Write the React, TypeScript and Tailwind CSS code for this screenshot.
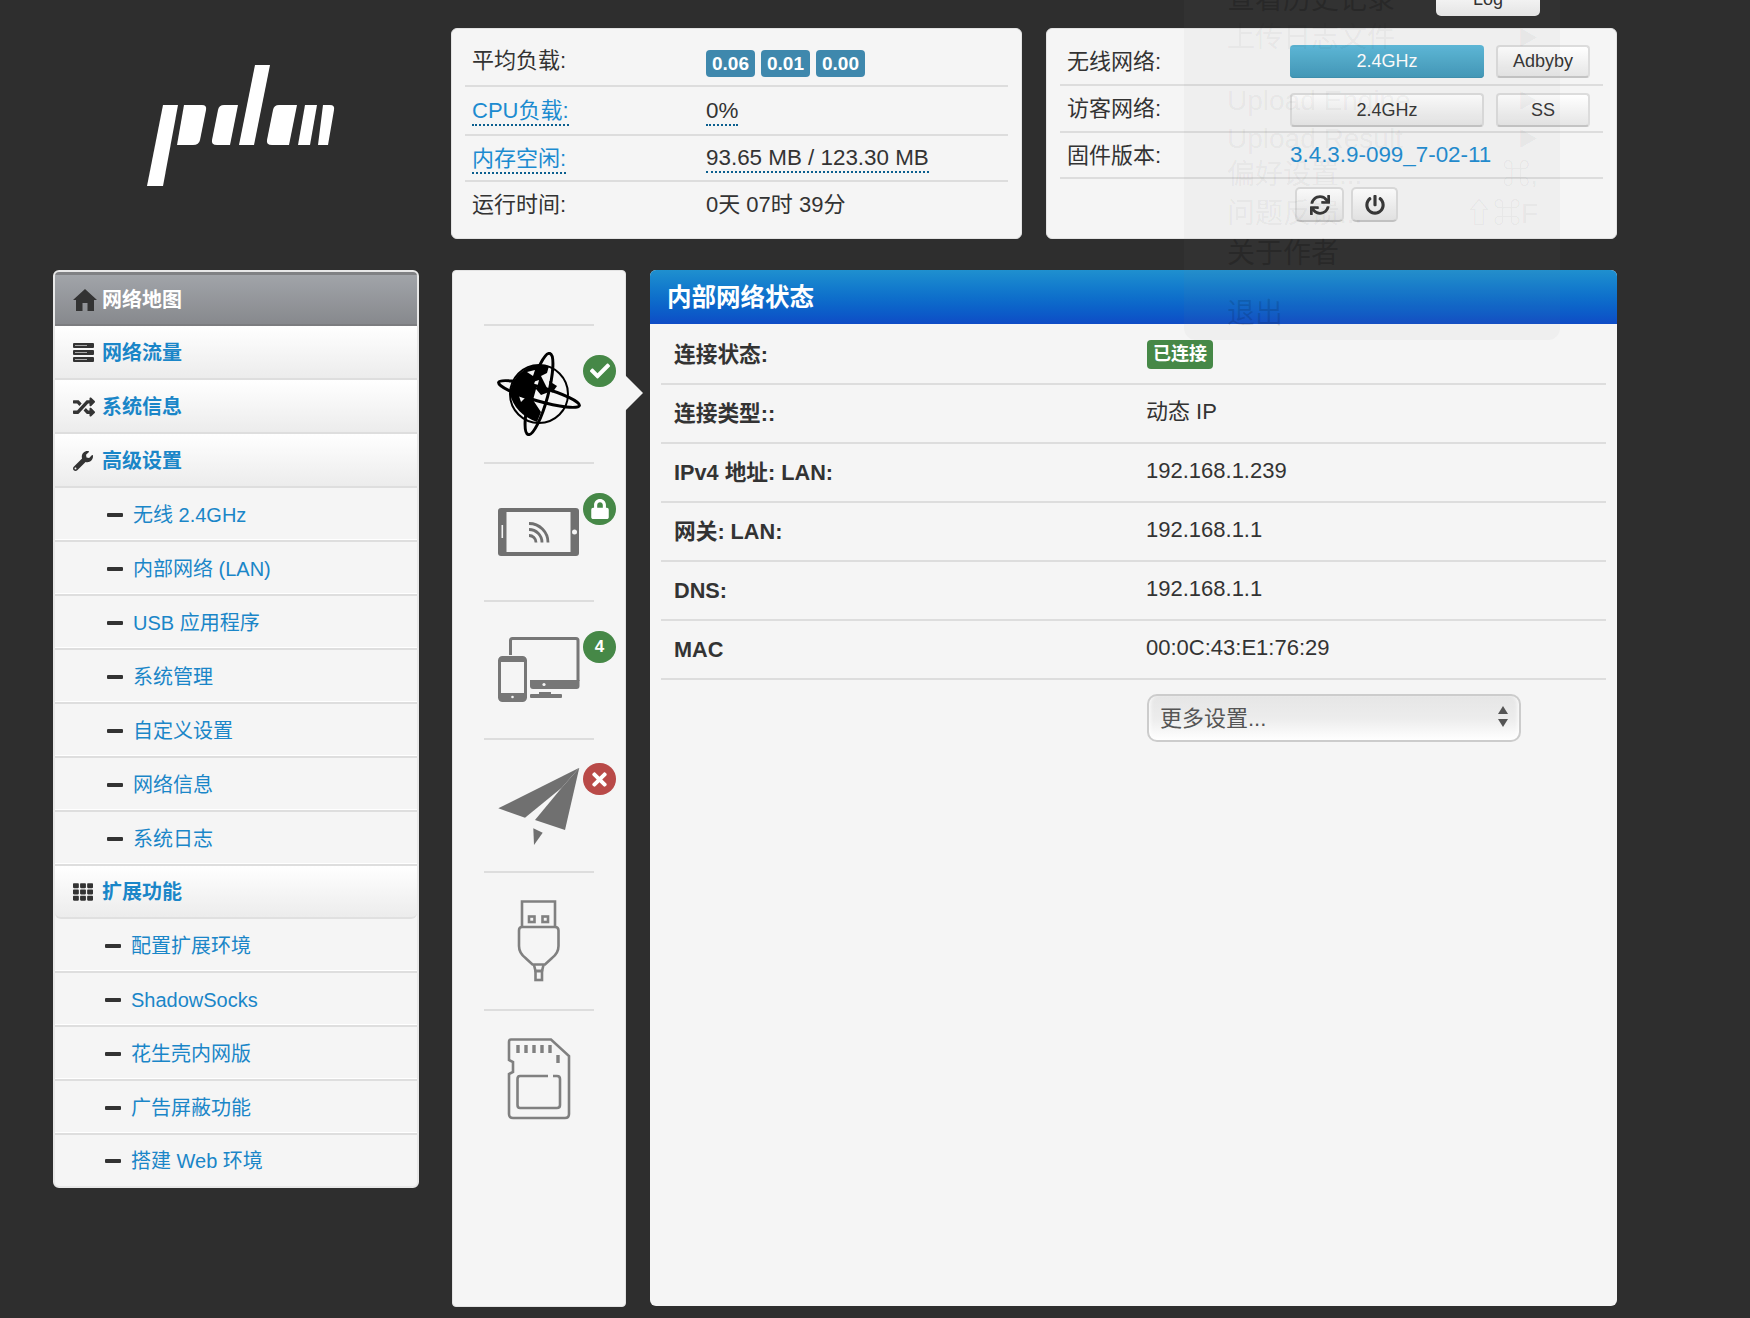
import { FaCheck, FaLock, FaPowerOff, FaRandom, FaSync, FaTh, FaTimes, FaWrench } from "react-icons/fa";

const subOne = ["无线 2.4GHz", "内部网络 (LAN)", "USB 应用程序", "系统管理", "自定义设置", "网络信息", "系统日志"];
const subTwo = ["配置扩展环境", "ShadowSocks", "花生壳内网版", "广告屏蔽功能"];

const statusRows = [
  { label: "连接状态:", value: null },
  { label: "连接类型::", value: "动态 IP" },
  { label: "IPv4 地址: LAN:", value: "192.168.1.239" },
  { label: "网关: LAN:", value: "192.168.1.1" },
  { label: "DNS:", value: "192.168.1.1" },
  { label: "MAC", value: "00:0C:43:E1:76:29" },
];

function Logo() {
  return (
    <svg width="200" height="130" viewBox="140 60 200 130" fill="#fff" className="ml-[140px] mt-[60px]">
      <polygon points="163,105 178,105 163,186 147,186" />
      <path d="M184 105H202Q207 105 206 110L200 140Q199 145 193 145H177Z" />
      <path d="M224 105H238L230 145H217Q211 145 212 140L218 110Q219 105 224 105Z" />
      <polygon points="255,65 270,65 254,145 239,145" />
      <path d="M279 105H297L289 145H272Q266 145 267 140L273 110Q274 105 279 105Z" />
      <polygon points="305,105 317,105 310,145 298,145" />
      <path d="M323 105H330Q335 105 334 110L328 145H318Z" />
    </svg>
  );
}

function HomeIcon() {
  return (
    <svg width="24" height="22" viewBox="0 0 24 22" fill="#333">
      <path d="M12 0L24 11H21V22H14.500V14H9.500V22H3V11H0Z" />
    </svg>
  );
}

function ServerIcon() {
  return (
    <svg width="21" height="19" viewBox="0 0 21 19" fill="#333">
      <rect x="0" y="0" width="21" height="5" rx="1" />
      <rect x="0" y="7" width="21" height="5" rx="1" />
      <rect x="0" y="14" width="21" height="5" rx="1" />
      <rect x="2" y="2" width="12" height="1" fill="#aaa" />
      <rect x="2" y="9" width="12" height="1" fill="#aaa" />
      <rect x="2" y="16" width="12" height="1" fill="#aaa" />
    </svg>
  );
}

function GlobeIcon() {
  return (
    <svg width="84" height="84" viewBox="0 0 84 84">
      <circle cx="42" cy="42" r="29" fill="none" stroke="#000" strokeWidth="2" />
      <path d="M22 22Q34 10 52 14L50 21L44 24L48 32L52 40L44 43L39 37L36 48L44 60L40 70Q18 62 13 42Q14 30 22 22Z" fill="#000" />
      <path d="M52 29L60 34L55 41Z" fill="#000" />
      <path d="M30 20L38 18L36 24Z M36 30L42 28L40 36Z M22 44L28 46L24 50Z" fill="#f5f5f5" />
      <ellipse cx="42" cy="42" rx="42" ry="7" fill="none" stroke="#000" strokeWidth="3" transform="rotate(16 42 42)" />
      <ellipse cx="42" cy="42" rx="42" ry="9" fill="none" stroke="#000" strokeWidth="3" transform="rotate(-75 42 42)" />
    </svg>
  );
}

function TabletIcon() {
  return (
    <svg width="82" height="48" viewBox="0 0 82 48">
      <rect width="81" height="48" rx="3" fill="#707070" />
      <rect x="8.500" y="4" width="64" height="40" fill="#f5f5f5" />
      <circle cx="76.500" cy="24" r="2.500" fill="#f5f5f5" />
      <rect x="3.500" y="17" width="1.600" height="13" fill="#f5f5f5" />
      <g fill="none" stroke="#707070" strokeWidth="2.800">
        <path d="M31 27.500A7 7 0 0 1 38 34.500" />
        <path d="M31 21.500A13 13 0 0 1 44 34.500" />
        <path d="M31 15.500A19 19 0 0 1 50 34.500" />
      </g>
    </svg>
  );
}

function DevicesIcon() {
  return (
    <svg width="82" height="66" viewBox="0 0 82 66">
      <path d="M12.500 18V3.500Q12.500 1.500 14.500 1.500H78Q80 1.500 80 3.500V44" fill="none" stroke="#777" strokeWidth="3" />
      <path d="M32 43H81.500V49Q81.500 52 78.500 52H35Q32 52 32 49Z" fill="#777" />
      <circle cx="46" cy="47.500" r="1.600" fill="#f5f5f5" />
      <rect x="41" y="55" width="12" height="2" fill="#777" />
      <rect x="32" y="57" width="32" height="4" rx="1" fill="#777" />
      <rect x="1.500" y="20.500" width="26" height="43" rx="3" fill="none" stroke="#777" strokeWidth="3" />
      <rect x="2" y="21" width="25" height="4" fill="#777" />
      <rect x="2" y="56" width="25" height="7" fill="#777" />
      <circle cx="14.500" cy="60" r="1.300" fill="#f5f5f5" />
    </svg>
  );
}

function PlaneIcon() {
  return (
    <svg width="82" height="78" viewBox="0 0 82 78" fill="#707070">
      <polygon points="81.300,0.700 0.300,41.300 27,50.700 63.700,20.700" />
      <polygon points="81.300,0.700 67,63 37,53 63.700,20.700" />
      <polygon points="35.300,61.300 44.700,65.700 36,78" />
    </svg>
  );
}

function UsbIcon() {
  return (
    <svg width="44" height="82" viewBox="0 0 44 82" fill="none" stroke="#808080" strokeWidth="2.600">
      <path d="M5 27V1.500H38V27" />
      <rect x="12" y="16.500" width="5.500" height="5.500" />
      <rect x="25.500" y="16.500" width="5.500" height="5.500" />
      <path d="M5 27H38Q41.500 27 41.500 30.500V46Q41.500 53 35 58L28 64.500H15.500L8.500 58Q2 53 2 46V30.500Q2 27 5 27Z" />
      <path d="M17 65L18.500 71H25L26.500 65" />
      <rect x="18.500" y="71" width="6.500" height="9" />
    </svg>
  );
}

function SdIcon() {
  return (
    <svg width="64" height="82" viewBox="0 0 64 82" fill="none" stroke="#808080" strokeWidth="2.600">
      <path d="M4 1.500H44L62 18V76Q62 80 58 80H6Q2 80 2 76V36L6 34V24L2 22V4Q2 1.500 4 1.500Z" />
      <g strokeWidth="3.400">
        <path d="M11 7V15M19 7V15M27 7V15M35 7V15M43 7V15M51 17V25" />
      </g>
      <path d="M41 38H13Q10.500 38 10.500 41V67Q10.500 70 13 70H50Q53 70 53 67V41Q53 38 50 38H46" />
    </svg>
  );
}

function Badge({ className, top, children }: { className: string; top: string; children: React.ReactNode }) {
  return (
    <span className={`absolute left-[99px] ${top} flex h-[32px] w-[33px] items-center justify-center rounded-full text-[17px] font-bold text-white ${className}`}>
      {children}
    </span>
  );
}

function Minus() {
  return <span className="block h-[4px] w-[16px] rounded-[1px] bg-[#333]" />;
}

function TopItem({ icon, label }: { icon: React.ReactNode; label: string }) {
  return (
    <div className="flex h-[54px] items-center border-b-[2px] border-[#dedede] bg-linear-to-b from-white to-[#ececec] pl-[18px] pt-[1px]">
      <span className="flex w-[29px] items-center">{icon}</span>
      <span className="text-[20px] font-bold text-[#1a86c8]">{label}</span>
    </div>
  );
}

function SubItem({ label, left }: { label: string; left: string }) {
  return (
    <div className={`flex h-[54px] items-center gap-[10px] border-b-[2px] border-[#dedede] pt-[1px] shadow-[inset_0_-1px_0_#fff] ${left}`}>
      <Minus />
      <span className="text-[20px] text-[#1a86c8]">{label}</span>
    </div>
  );
}

function GlassMenu() {
  return (
    <div className="pointer-events-none absolute left-[1184px] top-0 h-[340px] w-[376px] overflow-hidden rounded-b-[12px] bg-[#808088]/[0.05] pl-[43px] pr-[22px] text-[28px] leading-[38px] text-black/[0.05]">
      <div className="-mt-[19px] h-[38px] text-black/[0.2]">查看历史记录</div>
      <div className="flex h-[38px] justify-between"><span>上传日志文件</span><span className="text-[20px]">▶</span></div>
      <div className="mt-[25px] flex h-[38px] justify-between"><span>Upload Engine</span><span className="text-[20px]">▶</span></div>
      <div className="flex h-[36px] justify-between"><span>Upload Result</span><span className="text-[20px]">▶</span></div>
      <div className="flex h-[39px] justify-between"><span>偏好设置...</span><span>⌘,</span></div>
      <div className="flex h-[40px] justify-between"><span>问题反馈...</span><span>⇧⌘F</span></div>
      <div className="h-[38px] text-black/[0.2]">关于作者</div>
      <div className="mt-[22px] h-[38px] text-black/[0.12]">退出</div>
    </div>
  );
}

export default function App() {
  return (
    <div className="relative h-[1318px] w-[1750px] overflow-hidden bg-[#2e2e2e] font-['Liberation_Sans','Noto_Sans_CJK_SC',sans-serif] text-[22px] text-[#333]">
      <div className="flex h-[270px]">
        <div className="w-[451px]">
          <Logo />
        </div>

        <div className="mt-[28px] h-[211px] w-[571px] rounded-[6px] border border-[#e3e3e3] bg-[#f5f5f5] px-[13px]">
          <div className="flex h-[58px] items-center border-b-[2px] border-[#ddd] pl-[7px] pt-[6px]">
            <span className="w-[234px]">平均负载:</span>
            <div className="mt-[6px] flex gap-[6px] text-[19px] font-bold leading-[27px] text-white">
              <span className="rounded-[4px] bg-[#3f88ad] px-[6px]">0.06</span>
              <span className="rounded-[4px] bg-[#3f88ad] px-[6px]">0.01</span>
              <span className="rounded-[4px] bg-[#3f88ad] px-[6px]">0.00</span>
            </div>
          </div>
          <div className="flex h-[49px] items-center border-b-[2px] border-[#ddd] pl-[7px]">
            <span className="w-[234px]"><span className="inline-block border-b-[2px] border-dotted border-[#0b5f8f] leading-[26px] text-[#1c8bd0]">CPU负载:</span></span>
            <span className="inline-block border-b-[2px] border-dotted border-[#0b5f8f] pt-[2px] text-[22.400px] leading-[26px]">0%</span>
          </div>
          <div className="flex h-[46px] items-center border-b-[2px] border-[#ddd] pl-[7px]">
            <span className="w-[234px]"><span className="inline-block border-b-[2px] border-dotted border-[#0b5f8f] leading-[26px] text-[#1c8bd0]">内存空闲:</span></span>
            <span className="inline-block border-b-[2px] border-dotted border-[#0b5f8f] pt-[2px] text-[22.400px] leading-[26px]">93.65 MB / 123.30 MB</span>
          </div>
          <div className="flex h-[44px] items-center pl-[7px]">
            <span className="w-[234px]">运行时间:</span>
            <span>0天 07时 39分</span>
          </div>
        </div>

        <div className="ml-[24px] mt-[28px] h-[211px] w-[571px] rounded-[6px] border border-[#e3e3e3] bg-[#f5f5f5] px-[13px]">
          <div className="flex h-[57px] items-center border-b-[2px] border-[#ddd] pl-[7px] pt-[9px]">
            <span className="w-[223px]">无线网络:</span>
            <button className="h-[33px] w-[194px] rounded-[4px] bg-linear-to-b from-[#5bb9da] to-[#3f97b8] text-[18px] text-white shadow-[inset_0_-1px_0_#3a8fae]">2.4GHz</button>
            <button className="ml-[12px] h-[33px] w-[94px] rounded-[4px] border-[2px] border-[#dcdcdc] border-b-[#c4c4c4] bg-linear-to-b from-white to-[#e6e6e6] text-[18px]">Adbyby</button>
          </div>
          <div className="flex h-[47px] items-center border-b-[2px] border-[#ddd] pl-[7px]">
            <span className="w-[223px]">访客网络:</span>
            <button className="mt-[3px] h-[34px] w-[194px] rounded-[4px] border-[2px] border-[#dcdcdc] border-b-[#c4c4c4] bg-linear-to-b from-white to-[#e6e6e6] text-[18px]">2.4GHz</button>
            <button className="ml-[12px] mt-[3px] h-[34px] w-[94px] rounded-[4px] border-[2px] border-[#dcdcdc] border-b-[#c4c4c4] bg-linear-to-b from-white to-[#e6e6e6] text-[18px]">SS</button>
          </div>
          <div className="flex h-[46px] items-center border-b-[2px] border-[#ddd] pl-[7px]">
            <span className="w-[223px]">固件版本:</span>
            <span className="text-[22.400px] text-[#1c8bd0]">3.4.3.9-099_7-02-11</span>
          </div>
          <div className="flex justify-start gap-[7px] pl-[235px] pt-[8px]">
            <button className="flex h-[35px] w-[49px] items-center justify-center rounded-[5px] border-[2px] border-[#dcdcdc] border-b-[#c4c4c4] bg-linear-to-b from-white to-[#e6e6e6]"><FaSync size={20} color="#333" /></button>
            <button className="flex h-[35px] w-[47px] items-center justify-center rounded-[5px] border-[2px] border-[#dcdcdc] border-b-[#c4c4c4] bg-linear-to-b from-white to-[#e6e6e6]"><FaPowerOff size={20} color="#333" /></button>
          </div>
        </div>
      </div>

      <div className="flex items-start">
        <div className="ml-[53px] w-[366px] overflow-hidden rounded-[6px] border-[2px] border-[#e8e8e8] bg-[#f5f5f5]">
          <div className="flex h-[54px] items-center border-b-[2px] border-t-[3px] border-b-[#7c7d80] border-t-[#808184] bg-linear-to-b from-[#a1a4a9] to-[#87898d] pl-[18px]">
            <span className="flex w-[29px] items-center"><HomeIcon /></span>
            <span className="text-[20px] font-bold text-white">网络地图</span>
          </div>
          <TopItem icon={<ServerIcon />} label="网络流量" />
          <TopItem icon={<FaRandom size={22} color="#333" />} label="系统信息" />
          <TopItem icon={<FaWrench size={20} color="#333" />} label="高级设置" />
          {subOne.map((item) => (
            <SubItem key={item} label={item} left="pl-[52px]" />
          ))}
          <div className="flex h-[53px] items-center rounded-b-[6px] border-b-[2px] border-[#e0e0e0] bg-linear-to-b from-white to-[#ececec] pl-[18px]">
            <span className="flex w-[29px] items-center"><FaTh size={20} color="#333" /></span>
            <span className="text-[20px] font-bold text-[#1a86c8]">扩展功能</span>
          </div>
          {subTwo.map((item) => (
            <SubItem key={item} label={item} left="pl-[50px]" />
          ))}
          <div className="flex h-[51px] items-center gap-[10px] pl-[50px]">
            <Minus />
            <span className="text-[20px] text-[#1a86c8]">搭建 Web 环境</span>
          </div>
        </div>

        <div className="relative ml-[33px] h-[1037px] w-[174px] rounded-[4px] border border-[#e3e3e3] bg-[#f5f5f5] pl-[31px] pt-[53px]">
          {/* arrow pointing at the status panel */}
          <span className="absolute -right-[18px] top-[104px] h-0 w-0 border-y-[18px] border-l-[18px] border-y-transparent border-l-[#f5f5f5]" />
          <div className="relative flex h-[138px] w-[110px] items-center justify-center border-t-[2px] border-[#ddd]">
            <GlobeIcon />
            <Badge className="bg-[#468847]" top="top-[29px]"><FaCheck size={20} /></Badge>
          </div>
          <div className="relative flex h-[138px] w-[110px] items-center justify-center border-t-[2px] border-[#ddd]">
            <TabletIcon />
            <Badge className="bg-[#468847]" top="top-[29px]"><FaLock size={20} /></Badge>
          </div>
          <div className="relative flex h-[138px] w-[110px] items-center justify-center border-t-[2px] border-[#ddd]">
            <DevicesIcon />
            <Badge className="bg-[#468847]" top="top-[29px]">4</Badge>
          </div>
          <div className="relative flex h-[133px] w-[110px] items-center justify-center border-t-[2px] border-[#ddd]">
            <PlaneIcon />
            <Badge className="bg-[#b94a48]" top="top-[23px]"><FaTimes size={21} /></Badge>
          </div>
          <div className="flex h-[138px] w-[110px] items-center justify-center border-t-[2px] border-[#ddd]">
            <UsbIcon />
          </div>
          <div className="flex h-[138px] w-[110px] items-center justify-center border-t-[2px] border-[#ddd]">
            <SdIcon />
          </div>
        </div>

        <div className="ml-[24px] h-[1036px] w-[967px] overflow-hidden rounded-[6px] bg-[#f5f5f5]">
          <div className="flex h-[54px] items-center bg-linear-to-b from-[#1f90cf] to-[#0f4cc6] pl-[17px] pt-[3px] text-[24.500px] font-bold text-white">内部网络状态</div>
          <div className="px-[11px] pt-[2px]">
            {statusRows.map((row) => (
              <div key={row.label} className="flex h-[59px] items-center border-b-[2px] border-[#ddd]">
                <span className="w-[485px] pl-[13px] pt-[2px] text-[21.700px] font-bold">{row.label}</span>
                {row.value ? (
                  <span className="pb-[5px]">{row.value}</span>
                ) : (
                  <span className="ml-px rounded-[4px] bg-[#468847] px-[6px] py-[1px] text-[18px] font-bold text-white">已连接</span>
                )}
              </div>
            ))}
            <div className="relative ml-[486px] mt-[14px] h-[48px] w-[374px]">
              <select className="h-full w-full appearance-none rounded-[10px] border-[2px] border-[#cccccc] bg-linear-to-b from-[#e6e6e6] via-[#ececec] to-white pl-[11px] text-[22px] text-[#555] shadow-[inset_4px_0_4px_-3px_#fff,inset_-4px_0_4px_-3px_#fff]">
                <option>更多设置...</option>
              </select>
              <svg width="12" height="22" viewBox="0 0 12 22" fill="#555" className="pointer-events-none absolute right-[12px] top-[12px]">
                <polygon points="6,0 11,8 1,8" />
                <polygon points="1,13 11,13 6,21" />
              </svg>
            </div>
          </div>
        </div>
      </div>

      <GlassMenu />
      <div className="absolute left-[1436px] top-0 flex h-[16px] w-[104px] items-start justify-center overflow-hidden rounded-b-[5px] bg-linear-to-b from-[#f2f2f2] to-[#e4e4e4] text-[18px] leading-[16px]">
        <span className="-mt-[9px]">Log</span>
      </div>
    </div>
  );
}
